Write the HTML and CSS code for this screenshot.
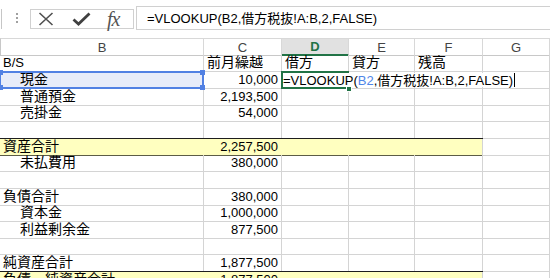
FILE: index.html
```html
<!DOCTYPE html>
<html lang="ja">
<head>
    <meta charset="UTF-8">
    <meta name="viewport" content="width=device-width, initial-scale=1.0">
    <title>B/S</title>
    <link rel="stylesheet" href="styles.css">
</head>
<body>
    <div class="formula-bar">
        <div class="name-box"></div>
        <div class="grip"><i></i><i></i><i></i></div>
        <div class="fx-buttons">
            <svg class="btn-x" width="16" height="14" viewBox="0 0 16 14">
                <path d="M1.5 1 L14.5 13 M14.5 1 L1.5 13" stroke="#505050" stroke-width="1.6" fill="none"/>
            </svg>
            <svg class="btn-ok" width="19" height="14" viewBox="0 0 19 14">
                <path d="M1.5 7.5 L6.5 12 L17.5 1.5" stroke="#404040" stroke-width="2.8" fill="none"/>
            </svg>
            <span class="btn-fx">fx</span>
        </div>
        <div class="formula-input">=VLOOKUP(B2,借方税抜!A:B,2,FALSE)</div>
    </div>

    <div class="sheet">
        <div class="row head">
            <div class="col-head first">B</div>
            <div class="col-head">C</div>
            <div class="col-head current">D</div>
            <div class="col-head">E</div>
            <div class="col-head">F</div>
            <div class="col-head">G</div>
        </div>

        <div class="row">
            <div class="cell">B/S</div>
            <div class="cell jp">前月繰越</div>
            <div class="cell jp">借方</div>
            <div class="cell jp">貸方</div>
            <div class="cell jp">残高</div>
            <div class="cell"></div>
        </div>
        <div class="row">
            <div class="cell jp indent picked">
                現金
                <span class="ref-box"><i class="tl"></i><i class="tr"></i><i class="bl"></i><i class="br"></i></span>
            </div>
            <div class="cell num">10,000</div>
            <div class="cell active">
                <div class="edit">=VLOOKUP(<span class="ref">B2</span>,借方税抜!A:B,2,FALSE)<span class="caret"></span></div>
                <span class="fill-handle"></span>
            </div>
            <div class="cell"></div>
            <div class="cell"></div>
            <div class="cell"></div>
        </div>
        <div class="row short">
            <div class="cell jp indent">普通預金</div>
            <div class="cell num">2,193,500</div>
            <div class="cell"></div>
            <div class="cell"></div>
            <div class="cell"></div>
            <div class="cell"></div>
        </div>
        <div class="row">
            <div class="cell jp indent">売掛金</div>
            <div class="cell num">54,000</div>
            <div class="cell"></div>
            <div class="cell"></div>
            <div class="cell"></div>
            <div class="cell"></div>
        </div>
        <div class="row">
            <div class="cell"></div>
            <div class="cell"></div>
            <div class="cell"></div>
            <div class="cell"></div>
            <div class="cell"></div>
            <div class="cell"></div>
        </div>
        <div class="row short total">
            <div class="cell jp">資産合計</div>
            <div class="cell num">2,257,500</div>
            <div class="cell"></div>
            <div class="cell"></div>
            <div class="cell"></div>
            <div class="cell"></div>
        </div>
        <div class="row">
            <div class="cell jp indent">未払費用</div>
            <div class="cell num">380,000</div>
            <div class="cell"></div>
            <div class="cell"></div>
            <div class="cell"></div>
            <div class="cell"></div>
        </div>
        <div class="row">
            <div class="cell"></div>
            <div class="cell"></div>
            <div class="cell"></div>
            <div class="cell"></div>
            <div class="cell"></div>
            <div class="cell"></div>
        </div>
        <div class="row short">
            <div class="cell jp">負債合計</div>
            <div class="cell num">380,000</div>
            <div class="cell"></div>
            <div class="cell"></div>
            <div class="cell"></div>
            <div class="cell"></div>
        </div>
        <div class="row">
            <div class="cell jp indent">資本金</div>
            <div class="cell num">1,000,000</div>
            <div class="cell"></div>
            <div class="cell"></div>
            <div class="cell"></div>
            <div class="cell"></div>
        </div>
        <div class="row">
            <div class="cell jp indent">利益剰余金</div>
            <div class="cell num">877,500</div>
            <div class="cell"></div>
            <div class="cell"></div>
            <div class="cell"></div>
            <div class="cell"></div>
        </div>
        <div class="row short">
            <div class="cell"></div>
            <div class="cell"></div>
            <div class="cell"></div>
            <div class="cell"></div>
            <div class="cell"></div>
            <div class="cell"></div>
        </div>
        <div class="row">
            <div class="cell jp">純資産合計</div>
            <div class="cell num">1,877,500</div>
            <div class="cell"></div>
            <div class="cell"></div>
            <div class="cell"></div>
            <div class="cell"></div>
        </div>
        <div class="row total">
            <div class="cell jp">負債・純資産合計</div>
            <div class="cell num">1,877,500</div>
            <div class="cell"></div>
            <div class="cell"></div>
            <div class="cell"></div>
            <div class="cell"></div>
        </div>
    </div>
</body>
</html>
```

FILE: styles.css
```css
* {
    margin: 0;
    padding: 0;
    box-sizing: border-box;
}

body {
    width: 550px;
    height: 278px;
    overflow: hidden;
    background-color: #fff;
    font-family: "Liberation Sans", "Noto Sans CJK JP", sans-serif;
    font-size: 13px;
    color: #000;
}

/* 数式バー */
.formula-bar {
    height: 38px;
    display: flex;
    align-items: flex-start;
}

.name-box {
    width: 2px;
    height: 20px;
    margin-top: 9px;
    border-right: 1px solid #c6c6c6;
}

.grip {
    margin: 13px 0 0 13px;
    width: 3px;
    display: flex;
    flex-direction: column;
    align-items: center;
    gap: 2px;
}

.grip i {
    width: 2px;
    height: 2px;
    background-color: #a0a0a0;
}

.fx-buttons {
    margin: 9px 0 0 12px;
    width: 104px;
    height: 20px;
    border: 1px solid #d0d0d0;
    display: flex;
    align-items: center;
}

.btn-x {
    margin-left: 7px;
}

.btn-ok {
    margin-left: 18px;
}

.btn-fx {
    margin-left: 16px;
    font-family: "Liberation Serif", serif;
    font-style: italic;
    font-size: 20px;
    line-height: 18px;
    color: #555;
    letter-spacing: -1px;
}

.formula-input {
    margin: 6px 0 0 2px;
    flex: 1;
    height: 24px;
    border: 1px solid #d0d0d0;
    border-right: none;
    padding-left: 10px;
    line-height: 24px;
    white-space: nowrap;
}

/* シート */
.row {
    display: grid;
    grid-template-columns: 204px 78px 67px 66px 68px 1fr;
    height: 17px;
}

.row.short {
    height: 16px;
}

.col-head {
    display: flex;
    justify-content: center;
    align-items: center;
    border-top: 1px solid #d8d8d8;
    border-right: 1px solid #d8d8d8;
    border-bottom: 1px solid #c8c8c8;
    color: #444;
}

.col-head.first {
    border-left: 1px solid #c8c8c8;
}

.col-head.current {
    background-color: #e1e1e1;
    color: #217346;
    font-weight: bold;
    border-bottom: 2px solid #217346;
}

.cell {
    display: flex;
    align-items: flex-end;
    padding: 0 2px 1px 3px;
    border-right: 1px solid #d4d4d4;
    border-bottom: 1px solid #d4d4d4;
    line-height: 15px;
    white-space: nowrap;
}

.cell.jp {
    font-size: 14px;
}

.cell.indent {
    padding-left: 20px;
}

.cell.num {
    justify-content: flex-end;
    padding-right: 3px;
}

/* 合計行 */
.total .cell:nth-child(-n+5) {
    background-color: #ffffc0;
    border-right-color: #ffffc0;
    border-bottom-color: #5c5c46;
    box-shadow: 0 -1px 0 #1e1e1e;
}

.total .cell:nth-child(5) {
    border-right-color: #d4d4d4;
}

/* 参照セル B2 */
.picked {
    position: relative;
    background-color: #e8ecf9;
}

.ref-box {
    position: absolute;
    top: -1px;
    left: -1px;
    right: -1px;
    bottom: -1px;
    border: 2px solid #5281e3;
}

.ref-box i {
    position: absolute;
    width: 5px;
    height: 5px;
    background-color: #5281e3;
}

.ref-box .tl { top: -3px; left: -3px; }
.ref-box .tr { top: -3px; right: -3px; }
.ref-box .bl { bottom: -3px; left: -3px; }
.ref-box .br { bottom: -3px; right: -3px; }

/* 編集中のセル D2 */
.active {
    position: relative;
}

.active::before {
    content: "";
    position: absolute;
    top: -1px;
    left: -1px;
    right: -1px;
    bottom: -1px;
    border: 2px solid #217346;
    z-index: 3;
}

.edit {
    position: absolute;
    top: 1px;
    left: 1px;
    height: 14px;
    padding: 0 4px 0 0;
    background-color: #fff;
    line-height: 15px;
    white-space: nowrap;
    z-index: 4;
}

.ref {
    color: #4f86e8;
}

.caret {
    display: inline-block;
    width: 1px;
    height: 14px;
    margin-left: 1px;
    vertical-align: -2px;
    background-color: #000;
}

.fill-handle {
    position: absolute;
    right: -4px;
    bottom: -4px;
    width: 6px;
    height: 6px;
    border: 1px solid #fff;
    background-color: #217346;
    z-index: 5;
}
```
